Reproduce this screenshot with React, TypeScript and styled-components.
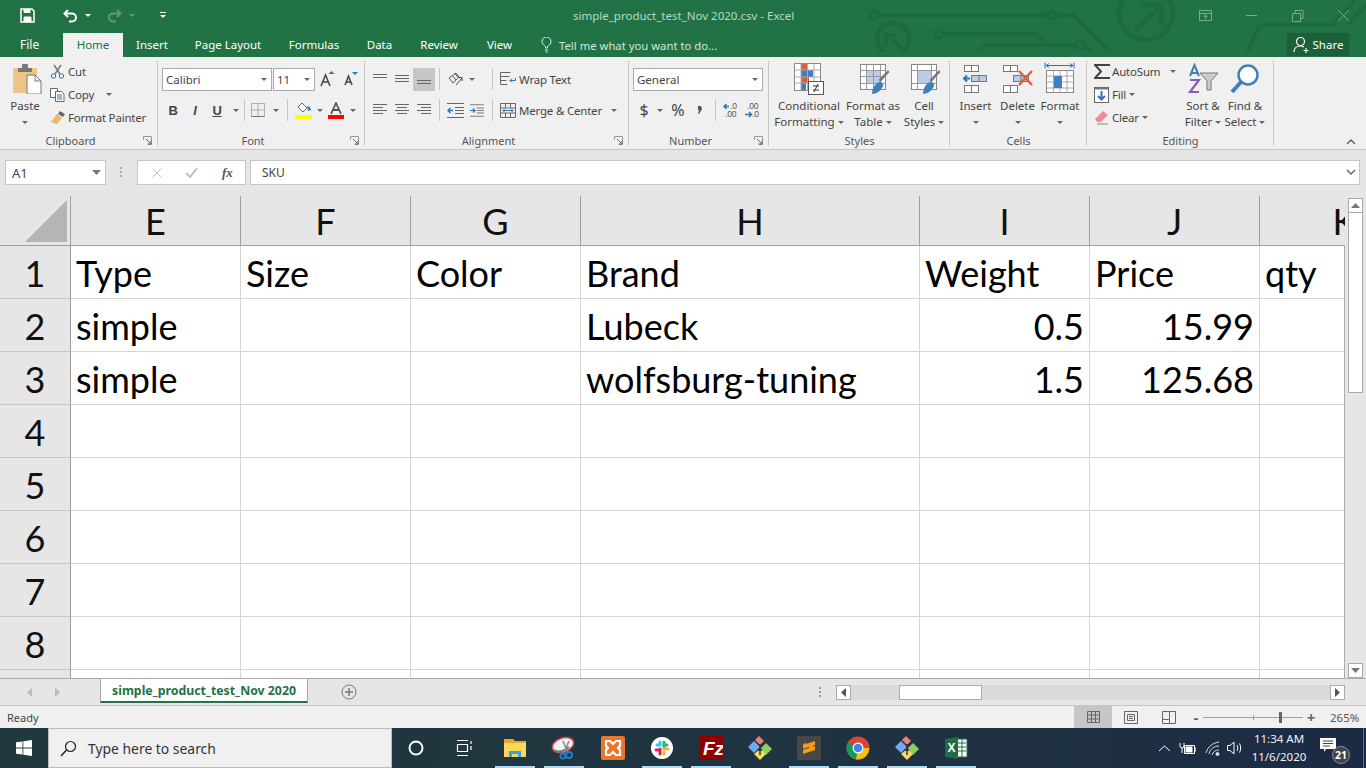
import React from 'react';
import styled, {createGlobalStyle} from 'styled-components';

const UI = '"Noto Sans", "Open Sans", sans-serif';
const SHEET = 'Lato, "Noto Sans", sans-serif';
const GREEN = '#217346';

const Global = createGlobalStyle`
  html, body { margin: 0; padding: 0; height: 100%; overflow: hidden; background: #f0f0f0; }
  * { box-sizing: border-box; }
  #root { width: 1366px; height: 768px; overflow: hidden; }
`;

const Page = styled.div`
  width: 1366px;
  height: 768px;
  display: flex;
  flex-direction: column;
  font-family: ${UI};
  font-size: 11.5px;
  color: #444;
`;

/* ---------- title bar ---------- */
const Header = styled.header`
  position: relative;
  height: 57px;
  flex: none;
  background: ${GREEN};
  color: #fff;
  overflow: hidden;
`;
const Circuit = styled.svg`
  position: absolute;
  left: 860px;
  top: 0;
`;
const TitleRow = styled.div`
  position: relative;
  height: 31px;
  display: flex;
  align-items: center;
`;
const Qat = styled.div`
  width: 573px;
  display: flex;
  align-items: center;
  padding-left: 20px;
`;
const QatSlot = styled.span<{$w: number}>`
  width: ${p => p.$w}px;
  display: flex;
  align-items: center;
`;
const QatCaret = styled.i<{$dim?: boolean}>`
  width: 0;
  height: 0;
  margin-left: 7px;
  border-left: 3px solid transparent;
  border-right: 3px solid transparent;
  border-top: 3px solid ${p => (p.$dim ? '#62977a' : '#fff')};
`;
const Title = styled.div`
  font-size: 11.5px;
  color: #bfd6c9;
  white-space: nowrap;
`;
const WinControls = styled.div`
  margin-left: auto;
  display: flex;
  width: 184px;
`;
const WinBtn = styled.span`
  width: 46px;
  display: flex;
  justify-content: center;
`;
const TabsRow = styled.nav`
  position: relative;
  height: 26px;
  display: flex;
  align-items: flex-end;
`;
const FileTab = styled.div`
  width: 63px;
  height: 24px;
  padding-left: 20px;
  line-height: 24px;
  font-size: 12px;
`;
const Tab = styled.div<{$w: number; $active?: boolean}>`
  width: ${p => p.$w}px;
  height: 24px;
  text-align: center;
  line-height: 23px;
  font-size: 11.5px;
  white-space: nowrap;
  background: ${p => (p.$active ? '#f0f0f0' : 'transparent')};
  color: ${p => (p.$active ? GREEN : '#fff')};
`;
const TellMe = styled.div`
  margin-left: 12px;
  height: 24px;
  display: flex;
  align-items: center;
  gap: 5px;
  font-size: 11.3px;
  color: #d5e5dc;
  white-space: nowrap;
`;
const Share = styled.div`
  margin-left: auto;
  margin-right: 17px;
  width: 62px;
  height: 23px;
  margin-bottom: 1px;
  background: #1c6039;
  display: flex;
  align-items: center;
  justify-content: center;
  gap: 3px;
  font-size: 11.5px;
`;

/* ---------- ribbon ---------- */
const Ribbon = styled.section`
  position: relative;
  height: 93px;
  flex: none;
  background: #f0f0f0;
  border-bottom: 1px solid #c6c6c6;
  display: flex;
  padding-top: 3px;
`;
const Group = styled.div<{$w: number}>`
  position: relative;
  width: ${p => p.$w}px;
  height: 86px;
  flex: none;
  display: flex;
  flex-direction: column;
  &::after {
    content: '';
    position: absolute;
    right: 0;
    top: 1px;
    bottom: 0;
    width: 1px;
    background: #c6c6c6;
  }
`;
const GroupBody = styled.div<{$left?: number}>`
  height: 74px;
  flex: none;
  display: flex;
  padding-left: ${p => p.$left ?? 0}px;
`;
const GroupLabel = styled.div<{$launch?: boolean}>`
  flex: none;
  text-align: center;
  font-size: 11px;
  line-height: 14px;
  color: #555;
  padding-right: ${p => (p.$launch ? 17 : 0)}px;
`;
const Launcher = styled.svg`
  position: absolute;
  right: 6px;
  bottom: 1px;
`;
const BigBtn = styled.div<{$w: number}>`
  width: ${p => p.$w}px;
  flex: none;
  display: flex;
  flex-direction: column;
  align-items: center;
  white-space: nowrap;
`;
const BigIcon = styled.div<{$shift?: number}>`
  height: 38px;
  display: flex;
  align-items: center;
  justify-content: center;
  margin-left: ${p => p.$shift ?? 0}px;
`;
const BigLine = styled.div`
  height: 16px;
  line-height: 16px;
  display: flex;
  align-items: center;
  gap: 3px;
`;
const Caret = styled.i<{$gap?: number}>`
  display: inline-block;
  width: 0;
  height: 0;
  flex: none;
  margin-left: ${p => p.$gap ?? 0}px;
  border-left: 3px solid transparent;
  border-right: 3px solid transparent;
  border-top: 3px solid #666;
`;
const SmallStack = styled.div<{$w?: number}>`
  width: ${p => (p.$w ? `${p.$w}px` : 'auto')};
  flex: none;
  display: flex;
  flex-direction: column;
`;
const SmallRow = styled.div`
  height: 23px;
  display: flex;
  align-items: center;
  white-space: nowrap;
  letter-spacing: -0.2px;
`;
const SmallIconBox = styled.span`
  width: 18px;
  flex: none;
  display: flex;
  justify-content: flex-start;
`;
const Rows = styled.div<{$left: number}>`
  padding: 8px 0 0 ${p => p.$left}px;
  display: flex;
  flex-direction: column;
  gap: 9px;
`;
const Row = styled.div`
  height: 22px;
  display: flex;
  align-items: center;
  white-space: nowrap;
  letter-spacing: -0.2px;
`;
const Slot = styled.span<{$w: number; $on?: boolean; $pad?: number}>`
  width: ${p => p.$w}px;
  height: 23px;
  flex: none;
  padding-left: ${p => p.$pad ?? 0}px;
  display: flex;
  align-items: center;
  justify-content: center;
  background: ${p => (p.$on ? '#c6c6c6' : 'transparent')};
`;
const VSep = styled.span`
  width: 1px;
  height: 22px;
  flex: none;
  background: #c6c6c6;
`;
const Select = styled.div<{$w: number; $gap?: number}>`
  width: ${p => p.$w}px;
  height: 23px;
  flex: none;
  margin-left: ${p => p.$gap ?? 0}px;
  background: #fff;
  border: 1px solid #ababab;
  display: flex;
  align-items: center;
  justify-content: space-between;
  padding: 0 4px 0 3px;
  font-size: 11.5px;
  letter-spacing: 0;
`;
const FontSample = styled.b<{$kind?: string}>`
  font-family: "Liberation Sans", sans-serif;
  font-size: 13px;
  color: #444;
  font-style: ${p => (p.$kind === 'i' ? 'italic' : 'normal')};
  font-weight: 700;
  text-decoration: ${p => (p.$kind === 'u' ? 'underline' : 'none')};
`;
const NumSign = styled.span`
  font-size: 16px;
  color: #444;
  letter-spacing: 0;
`;
const DecText = styled.text`
  font-family: "Liberation Sans", sans-serif;
  font-size: 8.5px;
  fill: #555;
`;
const Collapse = styled.svg`
  position: absolute;
  left: 1346px;
  bottom: 4px;
`;

/* ---------- formula bar ---------- */
const FormulaBar = styled.div`
  height: 40px;
  flex: none;
  background: #e6e6e6;
  display: flex;
  align-items: flex-start;
  padding: 10px 6px 0 5px;
`;
const NameBox = styled.div`
  width: 101px;
  height: 25px;
  background: #fff;
  border: 1px solid #c6c6c6;
  display: flex;
  align-items: center;
  justify-content: space-between;
  padding: 0 4px 0 6px;
  font-size: 13px;
`;
const Grip = styled.div`
  width: 31px;
  height: 25px;
  display: flex;
  align-items: center;
  justify-content: center;
`;
const FxBox = styled.div`
  width: 109px;
  height: 25px;
  background: #fff;
  border: 1px solid #c6c6c6;
  display: flex;
  align-items: center;
  padding-left: 1px;
`;
const FxSlot = styled.span`
  width: 36px;
  display: flex;
  justify-content: center;
  font-family: "Liberation Serif", serif;
  font-style: italic;
  font-weight: 700;
  font-size: 13px;
  color: #555;
`;
const FormulaInput = styled.div`
  margin-left: 4px;
  flex: 1;
  height: 25px;
  background: #fff;
  border: 1px solid #c6c6c6;
  display: flex;
  align-items: center;
  justify-content: space-between;
  padding: 0 3px 0 11px;
  font-size: 12px;
`;

/* ---------- sheet ---------- */
const SheetArea = styled.main`
  height: 488px;
  flex: none;
  background: #e6e6e6;
  display: flex;
  padding-top: 6px;
`;
const Sheet = styled.div`
  position: relative;
  width: 1345px;
  height: 482px;
  flex: none;
  overflow: hidden;
  &::after {
    content: '';
    position: absolute;
    right: 0;
    top: 49px;
    bottom: 0;
    width: 1px;
    background: #ababab;
  }
`;
const SheetRow = styled.div<{$head?: boolean}>`
  display: flex;
  height: ${p => (p.$head ? 50 : 53)}px;
  width: 1600px;
`;
const Corner = styled.div`
  width: 71px;
  flex: none;
  border-right: 1px solid #9f9f9f;
  border-bottom: 1px solid #9f9f9f;
  display: flex;
  align-items: flex-end;
  justify-content: flex-end;
  padding: 0 3px 3px 0;
`;
const RowHead = styled.div`
  width: 71px;
  flex: none;
  background: #e6e6e6;
  border-right: 1px solid #9f9f9f;
  border-bottom: 1px solid #c6c6c6;
  padding-top: 1px;
  display: flex;
  align-items: center;
  justify-content: center;
  font-family: ${SHEET};
  font-size: 36px;
  color: #111;
`;
const ColHead = styled.div<{$w: number}>`
  width: ${p => p.$w}px;
  flex: none;
  border-right: 1px solid #9f9f9f;
  border-bottom: 1px solid #9f9f9f;
  display: flex;
  align-items: center;
  justify-content: center;
  font-family: ${SHEET};
  font-size: 36px;
  color: #111;
`;
const Cell = styled.div<{$w: number; $right?: boolean}>`
  width: ${p => p.$w}px;
  flex: none;
  background: #fff;
  border-right: 1px solid #d4d4d4;
  border-bottom: 1px solid #d4d4d4;
  padding: 1px 5px 0;
  display: flex;
  align-items: center;
  justify-content: ${p => (p.$right ? 'flex-end' : 'flex-start')};
  font-family: ${SHEET};
  font-size: 36px;
  color: #000;
  white-space: nowrap;
`;
const VScroll = styled.div`
  margin: 2px 0 0 3px;
  width: 16px;
  height: 480px;
  display: flex;
  flex-direction: column;
`;
const ScrollBtn = styled.div`
  width: 15px;
  height: 15px;
  flex: none;
  background: #fff;
  border: 1px solid #ababab;
  display: flex;
  align-items: center;
  justify-content: center;
`;
const VThumb = styled.div`
  width: 15px;
  height: 180px;
  flex: none;
  background: #fff;
  border: 1px solid #ababab;
  border-top: none;
`;
const Spacer = styled.div`
  flex: 1;
`;

/* ---------- sheet tabs ---------- */
const TabBar = styled.div`
  height: 28px;
  flex: none;
  background: #e6e6e6;
  border-top: 1px solid #ababab;
  border-bottom: 1px solid #c6c6c6;
  display: flex;
  align-items: flex-start;
`;
const TabNav = styled.div`
  width: 100px;
  height: 26px;
  display: flex;
  align-items: center;
  padding-left: 27px;
  gap: 23px;
`;
const SheetTab = styled.div`
  width: 208px;
  height: 25px;
  margin-top: -1px;
  background: #fff;
  border: 1px solid #ababab;
  border-bottom: 2px solid ${GREEN};
  color: ${GREEN};
  font-weight: 700;
  font-size: 12.3px;
  line-height: 23px;
  text-align: center;
  white-space: nowrap;
`;
const AddSheet = styled.div`
  width: 82px;
  height: 26px;
  display: flex;
  align-items: center;
  justify-content: center;
`;
const HScrollWrap = styled.div`
  margin-left: auto;
  margin-right: 21px;
  margin-top: 6px;
  display: flex;
  align-items: center;
  width: 530px;
`;
const HGrip = styled.div`
  width: 21px;
  display: flex;
  justify-content: flex-start;
  padding-left: 4px;
`;
const HTrack = styled.div`
  flex: 1;
  height: 15px;
  background: #dadada;
  padding-left: 48px;
`;
const HThumb = styled.div`
  width: 83px;
  height: 15px;
  background: #fff;
  border: 1px solid #ababab;
`;

/* ---------- status bar ---------- */
const StatusBar = styled.div`
  height: 22px;
  flex: none;
  background: #f0f0f0;
  display: flex;
  align-items: center;
  padding-left: 7px;
  font-size: 11px;
`;
const StatusRight = styled.div`
  margin-left: auto;
  display: flex;
  align-items: center;
  height: 22px;
`;
const ViewBtn = styled.span<{$on?: boolean}>`
  width: 38px;
  height: 22px;
  display: flex;
  align-items: center;
  justify-content: center;
  background: ${p => (p.$on ? '#c6c6c6' : 'transparent')};
`;
const Zoom = styled.div`
  display: flex;
  align-items: center;
  margin-left: 2px;
`;
const ZoomTrack = styled.div`
  position: relative;
  width: 100px;
  height: 1px;
  margin: 0 2px 0 1px;
  background: #a0a0a0;
`;
const ZoomTick = styled.i<{$pos: number; $big?: boolean}>`
  position: absolute;
  left: ${p => p.$pos}px;
  top: ${p => (p.$big ? -5 : -2)}px;
  width: ${p => (p.$big ? 3 : 1)}px;
  height: ${p => (p.$big ? 11 : 5)}px;
  background: ${p => (p.$big ? '#666' : '#a0a0a0')};
`;
const ZoomSign = styled.span`
  font-size: 15px;
  font-weight: 700;
  width: 12px;
  text-align: center;
  color: #666;
  line-height: 15px;
`;
const ZoomText = styled.span`
  width: 49px;
  padding-left: 13px;
  font-size: 11.5px;
  color: #555;
`;

/* ---------- taskbar ---------- */
const Taskbar = styled.footer`
  height: 40px;
  flex: none;
  background: linear-gradient(90deg, #20393f 0%, #21363f 40%, #1c2b45 100%);
  display: flex;
  align-items: center;
`;
const StartBtn = styled.div`
  width: 48px;
  display: flex;
  justify-content: center;
`;
const SearchBox = styled.div`
  width: 344px;
  height: 40px;
  background: #f0f0f0;
  border: 1px solid #b8bcc0;
  display: flex;
  align-items: center;
  padding-left: 11px;
  gap: 11px;
  font-size: 13.9px;
  color: #333;
`;
const TaskSlot = styled.div`
  width: 48px;
  display: flex;
  justify-content: center;
`;
const TaskGap = styled.div`
  width: 2px;
`;
const AppSlot = styled.div<{$running?: boolean}>`
  position: relative;
  width: 49px;
  height: 40px;
  display: flex;
  align-items: center;
  justify-content: center;
  &::after {
    content: '';
    display: ${p => (p.$running ? 'block' : 'none')};
    position: absolute;
    left: 5px;
    right: 4px;
    bottom: 0;
    height: 2px;
    background: #a9dcfb;
  }
`;
const Tray = styled.div`
  margin-left: auto;
  display: flex;
  align-items: center;
  color: #fff;
  height: 40px;
`;
const TraySlot = styled.div<{$w: number; $pad?: number}>`
  width: ${p => p.$w}px;
  padding-left: ${p => p.$pad ?? 0}px;
  display: flex;
  justify-content: center;
`;
const Clock = styled.div`
  width: 68px;
  text-align: center;
  font-size: 11.5px;
  line-height: 18px;
  color: #f2f2f2;
`;
const Notify = styled.div`
  position: relative;
  width: 36px;
  height: 40px;
  display: flex;
  align-items: center;
  justify-content: center;
`;
const NotifyIcon = styled.svg`
  margin: -6px 0 0 -6px;
`;
const NotifyBadge = styled.span`
  position: absolute;
  left: 19px;
  top: 18px;
  width: 18px;
  height: 18px;
  border-radius: 50%;
  background: #3c434a;
  border: 1px solid #8a8f94;
  color: #fff;
  font-size: 10.5px;
  font-weight: 700;
  line-height: 16px;
  text-align: center;
`;
const DesktopEdge = styled.div`
  width: 15px;
  height: 40px;
  border-right: 1px solid #66727f;
  margin-right: 2px;
`;
const FzLetters = styled.text`
  font-family: "Liberation Sans", sans-serif;
  font-style: italic;
  font-weight: 700;
  font-size: 19px;
  fill: #fff;
`;
const XlLetter = styled.text`
  font-family: "Liberation Sans", sans-serif;
  font-weight: 700;
  font-size: 12px;
  fill: #fff;
`;

/* ---------- drawings ---------- */
const Launch = () => (
  <Launcher width="9" height="9" viewBox="0 0 9 9" fill="none">
    <path d="M.5 4V.5H8.500V8.500H5" stroke="#999" />
    <path d="M3 3l5 5M8 4.500V8H4.500" stroke="#666" />
  </Launcher>
);

const Lines = ({rows, y0 = 0}: {rows: [number, number][]; y0?: number}) => (
  <svg width="16" height="16" viewBox="0 0 16 16" stroke="#666" fill="none">
    {rows.map(([a, b], i) => (
      <path key={i} d={`M${a} ${y0 + i * 3 + 0.5}H${b}`} />
    ))}
  </svg>
);

const FourLines = ({kind}: {kind: 'l' | 'c' | 'r'}) => {
  const rows = [0, 1, 2, 3].map(i => {
    const len = i % 2 ? 10 : 14;
    const x = kind === 'l' ? 1 : kind === 'c' ? 8 - len / 2 : 15 - len;
    return [x, x + len] as [number, number];
  });
  return <Lines rows={rows} y0={2} />;
};

const Paste = () => (
  <svg width="30" height="30" viewBox="0 0 30 30">
    <rect x="1" y="4" width="24" height="25" rx="1" fill="#edc586" />
    <path d="M6 4h4V2a3 3 0 016 0v2h4v4H6z" fill="#777" />
    <path d="M15 11h8l6 6v13H15z" fill="#fff" stroke="#777" />
    <path d="M23 11v6h6" fill="none" stroke="#777" />
  </svg>
);

const StyleGrid = ({big}: {big?: boolean}) => (
  <svg width="30" height="30" viewBox="0 0 30 30" fill="none">
    <rect x=".5" y=".5" width="25" height="25" fill="#fff" stroke="#888" />
    <rect x="6" y={big ? 6 : 7} width={big ? 14 : 15} height={big ? 13 : 12} fill="#b9cee6" />
    {big ? (
      <path d="M.5 6.500h25M.5 19.500h25M6.500.5v25M20.500.5v25" stroke="#999" />
    ) : (
      <path d="M.5 6.500h25M.5 12.500h25M.5 19.500h25M6.500.5v25M13.500.5v25M20.500.5v25" stroke="#999" />
    )}
    <path d="M28 6l1.500 2-9 10-2-2z" fill="#777" />
    <path d="M12 30c0-6 4-12 8-12 3 0 4 3 2 6-2 3-6 6-10 6z" fill="#3f7fbf" />
  </svg>
);

const CondFormat = () => (
  <svg width="30" height="32" viewBox="0 0 30 32" fill="none">
    <rect x=".5" y=".5" width="26" height="27" fill="#fff" stroke="#888" />
    <path d="M7 1h6v6H7zM7 14h8v6H7z" fill="#d9603b" />
    <path d="M7 7h12v7H7zM7 20h5v7H7z" fill="#3f7fbf" />
    <path d="M.5 7h26M.5 14h26M.5 20h26M7 .5v27M13.500.5v27M20 .5v27" stroke="#aaa" />
    <rect x="14.500" y="18.500" width="15" height="13" fill="#fff" stroke="#555" />
    <path d="M19 23h6M19 27h6M24 21l-4 8" stroke="#333" />
  </svg>
);

const CellsIcon = ({kind}: {kind: 'insert' | 'delete'}) => (
  <svg width="32" height="30" viewBox="0 0 32 30" fill="none" stroke="#777">
    <rect x={kind === 'insert' ? 4.5 : 1.5} y="1.500" width="14" height="6" fill="#fff" />
    <path d={kind === 'insert' ? 'M11.500 1.500v6' : 'M8.500 1.500v6'} />
    <rect x="11.500" y="11.500" width="15" height="6" fill="#b9cee6" />
    <path d="M19 11.500v6" />
    <rect x={kind === 'insert' ? 4.5 : 1.5} y="21.500" width="14" height="7" fill="#fff" />
    <path d={kind === 'insert' ? 'M11.500 21.500v7' : 'M8.500 21.500v7'} />
    {kind === 'insert' ? (
      <path d="M10 14.500H4M7 11.500l-3 3 3 3" stroke="#2e75b6" strokeWidth="2" />
    ) : (
      <path d="M17 7l13 14M30 7L17 21" stroke="#d9603b" strokeWidth="2.500" />
    )}
  </svg>
);

const FormatIcon = () => (
  <svg width="32" height="34" viewBox="0 0 32 34" fill="none">
    <path d="M1 .5v6M30 .5v6M2 3.500h27M2 3.500l3-2M2 3.500l3 2M29 3.500l-3-2M29 3.500l-3 2" stroke="#2e75b6" />
    <rect x="2.500" y="8.500" width="27" height="22" fill="#fff" stroke="#888" />
    <path d="M2.500 14h27M2.500 20h27M2.500 26h27M9.500 8.500v22M16 8.500v22M23 8.500v22" stroke="#aaa" />
    <rect x="10" y="14" width="8" height="12" fill="#3f7fbf" />
  </svg>
);

const Tb = ({d, w = 16, h = 16, c = '#666', f = 'none'}: {d: string; w?: number; h?: number; c?: string; f?: string}) => (
  <svg width={w} height={h} viewBox={`0 0 ${w} ${h}`} fill={f} stroke={c}>
    <path d={d} />
  </svg>
);

const Diamond = () => (
  <svg width="26" height="26" viewBox="0 0 26 26">
    <path d="M13 14l6-6 6 6-6 6z" fill="#8ed05c" />
    <path d="M1 12l6-6 6 6-6 6z" fill="#74a9f5" />
    <path d="M7 19l6-5 6 5-6 6z" fill="#f8d968" />
    <path d="M8 5l4-4 5 5-4 4z" fill="#ef7f7f" />
    <path d="M13 9v11M11 14l2 2 2-2" stroke="#333" strokeWidth="1.500" fill="none" />
  </svg>
);

const Apps = [
  {
    on: true,
    node: (
      <svg width="24" height="20" viewBox="0 0 24 20">
        <path d="M1 1h9l2 2h11v16H1z" fill="#e8a72b" />
        <path d="M1 5h22v14H1z" fill="#fbd85a" />
        <path d="M6 19v-6h12v6h-3v-3H9v3z" fill="#3aa0e0" />
      </svg>
    ),
  },
  {
    on: true,
    node: (
      <svg width="26" height="24" viewBox="0 0 26 24" fill="none">
        <ellipse cx="12" cy="9" rx="11" ry="7" transform="rotate(-20 12 9)" fill="#f2f2f2" stroke="#d44" strokeWidth="1.500" />
        <path d="M3 14c4 3 10 1 15-3" stroke="#777" strokeWidth="2" />
        <path d="M12 5l5 12M18 5l-5 12" stroke="#888" strokeWidth="1.500" />
        <circle cx="18" cy="19" r="3" stroke="#1a80c8" strokeWidth="2" />
        <circle cx="12" cy="20" r="2.500" stroke="#1a80c8" strokeWidth="2" />
      </svg>
    ),
  },
  {
    on: false,
    node: (
      <svg width="24" height="24" viewBox="0 0 24 24" fill="none">
        <rect width="24" height="24" rx="2" fill="#e8762c" />
        <path d="M5 5h4l3 3 3-3h4v5l-2 2 2 2v5h-4l-3-3-3 3H5v-5l2-2-2-2z" stroke="#fff" strokeWidth="2.200" />
      </svg>
    ),
  },
  {
    on: true,
    node: (
      <svg width="22" height="22" viewBox="0 0 22 22" fill="none" strokeWidth="3" strokeLinecap="round">
        <circle cx="11" cy="11" r="11" fill="#fff" />
        <path d="M9 5v3H6" stroke="#36c5f0" />
        <path d="M13 5v5" stroke="#2eb67d" />
        <path d="M13 8h3" stroke="#2eb67d" />
        <path d="M17 12h-4" stroke="#ecb22e" />
        <path d="M13 17v-2" stroke="#ecb22e" />
        <path d="M9 12v5" stroke="#e01e5a" />
        <path d="M5 13h4" stroke="#e01e5a" />
      </svg>
    ),
  },
  {
    on: true,
    node: (
      <svg width="24" height="24" viewBox="0 0 24 24">
        <rect width="24" height="24" fill="#8f0000" />
        <FzLetters x="4" y="19">Fz</FzLetters>
      </svg>
    ),
  },
  {on: false, node: <Diamond />},
  {
    on: true,
    node: (
      <svg width="24" height="24" viewBox="0 0 24 24">
        <rect width="24" height="24" rx="2" fill="#474747" />
        <path d="M18 5L6 9v4l12 -4zM18 10L6 14v4l12-4zM6 9l12 5v-3L8 7z" fill="#f89a1c" />
      </svg>
    ),
  },
  {
    on: true,
    node: (
      <svg width="24" height="24" viewBox="0 0 24 24">
        <circle cx="12" cy="12" r="11.500" fill="#db4437" />
        <path d="M12 12L2 6.500A11.500 11.500 0 002 17.500 11.500 11.500 0 0010 23.400z" fill="#0f9d58" />
        <path d="M12 12h11.300A11.500 11.500 0 0110 23.400z" fill="#f4c20d" />
        <circle cx="12" cy="12" r="5.500" fill="#fff" />
        <circle cx="12" cy="12" r="4.300" fill="#4285f4" />
      </svg>
    ),
  },
  {on: true, node: <Diamond />},
  {
    on: true,
    node: (
      <svg width="24" height="24" viewBox="0 0 24 24">
        <path d="M12 3h11v18H12z" fill="#fff" stroke="#217346" />
        <path d="M14 7h8M14 11h8M14 15h8M18 3v18" stroke="#217346" />
        <path d="M1 3l13-2v22L1 21z" fill="#1d6f42" />
        <XlLetter x="3.500" y="16">X</XlLetter>
      </svg>
    ),
  },
];

const columns = [
  {label: 'E', w: 170},
  {label: 'F', w: 170},
  {label: 'G', w: 170},
  {label: 'H', w: 339},
  {label: 'I', w: 170},
  {label: 'J', w: 170},
  {label: 'K', w: 170},
];

const rows: Array<Array<string>> = [
  ['Type', 'Size', 'Color', 'Brand', 'Weight', 'Price', 'qty'],
  ['simple', '', '', 'Lubeck', '0.5', '15.99', ''],
  ['simple', '', '', 'wolfsburg-tuning', '1.5', '125.68', ''],
  ['', '', '', '', '', '', ''],
  ['', '', '', '', '', '', ''],
  ['', '', '', '', '', '', ''],
  ['', '', '', '', '', '', ''],
  ['', '', '', '', '', '', ''],
  ['', '', '', '', '', '', ''],
];

const App: React.FC = () => {
  return (
    <Page>
      <Global />
      <Header>
        <Circuit width="506" height="52" viewBox="860 0 506 52" fill="none" stroke="#1e6a3f" strokeWidth="4">
          <circle cx="874" cy="15" r="4" strokeWidth="3" />
          <path d="M878 15H1047M1055 15h19l37 37" />
          <circle cx="1051" cy="15" r="4" strokeWidth="3" />
          <circle cx="939" cy="34" r="4" strokeWidth="3" />
          <path d="M943 34h93l12 11h28M1084 45l8 7" />
          <circle cx="1080" cy="45" r="4" strokeWidth="3" />
          <path d="M977 52l10-7h89" />
          <circle cx="1146" cy="13" r="27" strokeWidth="5" />
          <path d="M1135 31l26-26M1141 5h20v20" strokeWidth="5" />
          <circle cx="893" cy="39" r="16" strokeWidth="5" />
          <path d="M901 47l-15-12M886 46V35h11" strokeWidth="4" />
          <path d="M1247 52l13-27h73l22-25M1347 25l19-20" />
        </Circuit>
        <TitleRow>
          <Qat>
            <QatSlot $w={43}>
              <svg width="15" height="15" viewBox="0 0 15 15" fill="none" stroke="#fff">
                <path d="M1 1h11l2 2v11H1z" strokeWidth="1.500" />
                <path d="M4 1.500h6v3H4zM4 14V9h7v5" fill="#fff" />
              </svg>
            </QatSlot>
            <QatSlot $w={44}>
              <svg width="15" height="14" viewBox="0 0 15 14" fill="none" stroke="#fff" strokeWidth="2">
                <path d="M5 1L1.500 4.500 5 8M2 4.500h7a4 4 0 010 8H6" />
              </svg>
              <QatCaret />
            </QatSlot>
            <QatSlot $w={53}>
              <svg width="15" height="14" viewBox="0 0 15 14" fill="none" stroke="#62977a" strokeWidth="2">
                <path d="M10 1l3.500 3.500L10 8M13 4.500H6a4 4 0 000 8h3" />
              </svg>
              <QatCaret $dim />
            </QatSlot>
            <svg width="7" height="7" viewBox="0 0 7 7" fill="#fff">
              <rect width="6" height="1" />
              <path d="M0 3h6L3 6z" />
            </svg>
          </Qat>
          <Title>simple_product_test_Nov 2020.csv - Excel</Title>
          <WinControls>
            <WinBtn>
              <Tb d="M1.500 2.500h12v10h-12zM1.500 5.500h12M7.500 11V7M5.500 9l2-2 2 2" w={15} h={15} c="#7fa98f" />
            </WinBtn>
            <WinBtn>
              <Tb d="M2 7.500h11" w={15} h={15} c="#7fa98f" />
            </WinBtn>
            <WinBtn>
              <Tb d="M2.500 5.500h8v8h-8zM5 5V2.500h8v8h-2" w={15} h={15} c="#7fa98f" />
            </WinBtn>
            <WinBtn>
              <Tb d="M2 2l11 11M13 2L2 13" w={15} h={15} c="#7fa98f" />
            </WinBtn>
          </WinControls>
        </TitleRow>
        <TabsRow>
          <FileTab>File</FileTab>
          <Tab $w={60} $active>Home</Tab>
          <Tab $w={58}>Insert</Tab>
          <Tab $w={94}>Page Layout</Tab>
          <Tab $w={78}>Formulas</Tab>
          <Tab $w={53}>Data</Tab>
          <Tab $w={66}>Review</Tab>
          <Tab $w={55}>View</Tab>
          <TellMe>
            <Tb d="M6.500 11v-1.500C5 8 3 7 3 4.500a4.500 4.500 0 019 0c0 2.500-2 3.500-3.500 5V11zM6 13h3M6.500 15h2" w={15} h={16} c="#e8f0ec" />
            Tell me what you want to do...
          </TellMe>
          <Share>
            <svg width="17" height="18" viewBox="0 0 17 18" fill="none" stroke="#fff" strokeWidth="1.200">
              <circle cx="7.500" cy="5.500" r="4" />
              <path d="M1 16c0-4 3-6 6.500-6 1.500 0 2.500.4 3.500 1M13 12v5M10.500 14.500h5" />
            </svg>
            Share
          </Share>
        </TabsRow>
      </Header>

      <Ribbon>
        <Group $w={158}>
          <GroupBody>
            <BigBtn $w={50}>
              <BigIcon $shift={3}><Paste /></BigIcon>
              <BigLine>Paste</BigLine>
              <BigLine><Caret /></BigLine>
            </BigBtn>
            <SmallStack>
              <SmallRow>
                <SmallIconBox>
                  <svg width="15" height="15" viewBox="0 0 15 15" fill="none">
                    <path d="M4 1l6 9M11 1L5 10" stroke="#777" strokeWidth="1.500" />
                    <circle cx="3.500" cy="12" r="2.200" stroke="#2e75b6" />
                    <circle cx="11.500" cy="12" r="2.200" stroke="#2e75b6" />
                  </svg>
                </SmallIconBox>
                Cut
              </SmallRow>
              <SmallRow>
                <SmallIconBox>
                  <svg width="15" height="15" viewBox="0 0 15 15" fill="#fff" stroke="#666">
                    <path d="M.5 1.500h7v9h-7z" />
                    <path d="M5.500 4.500h6l2.500 2.500v7.500H5.500z" />
                    <path d="M7 8h5M7 10h5M7 12h5" stroke="#2e75b6" />
                  </svg>
                </SmallIconBox>
                Copy
                <Caret $gap={12} />
              </SmallRow>
              <SmallRow>
                <SmallIconBox>
                  <svg width="16" height="15" viewBox="0 0 16 15">
                    <path d="M10 1l5 3-2 3-5-3z" fill="#666" />
                    <path d="M7 4l5 4-5 6c-2 0-5-2-7-3 2 0 3-1 3-2z" fill="#edb868" />
                  </svg>
                </SmallIconBox>
                Format Painter
              </SmallRow>
            </SmallStack>
          </GroupBody>
          <GroupLabel $launch>Clipboard</GroupLabel>
          <Launch />
        </Group>

        <Group $w={207}>
          <GroupBody>
            <Rows $left={4}>
              <Row>
                <Select $w={110}>Calibri<Caret /></Select>
                <Select $w={42} $gap={1}>11<Caret /></Select>
                <Slot $w={26}>
                  <svg width="16" height="16" viewBox="0 0 16 16" fill="none">
                    <path d="M1 15L5.500 4 10 15M3 11h5" stroke="#444" strokeWidth="1.500" />
                    <path d="M8.500 3l3-3 3 3z" fill="#2e75b6" />
                  </svg>
                </Slot>
                <Slot $w={20}>
                  <svg width="14" height="14" viewBox="0 0 14 14" fill="none">
                    <path d="M1 13L4.500 4 8 13M2.500 10h4" stroke="#444" strokeWidth="1.500" />
                    <path d="M8 0h6l-3 3z" fill="#2e75b6" />
                  </svg>
                </Slot>
              </Row>
              <Row>
                <Slot $w={22}><FontSample>B</FontSample></Slot>
                <Slot $w={22}><FontSample $kind="i">I</FontSample></Slot>
                <Slot $w={22}><FontSample $kind="u">U</FontSample></Slot>
                <Slot $w={16}><Caret /></Slot>
                <VSep />
                <Slot $w={26}>
                  <svg width="14" height="14" viewBox="0 0 14 14" fill="none" stroke="#777" strokeDasharray="1 1">
                    <path d="M.5.500h13v13H.5zM7 .5v13M.5 7h13" />
                    <path d="M.5 13.500h13" strokeDasharray="none" />
                  </svg>
                </Slot>
                <Slot $w={10}><Caret /></Slot>
                <Slot $w={6} />
                <VSep />
                <Slot $w={30}>
                  <svg width="17" height="17" viewBox="0 0 17 17" fill="none">
                    <path d="M7 1l5 5-4 4-5-5z" fill="#fff" stroke="#666" />
                    <path d="M12 4l3 1 1 3-3 1z" fill="#3f7fbf" />
                    <rect y="13" width="17" height="4" fill="#ffff00" />
                  </svg>
                </Slot>
                <Slot $w={3}><Caret /></Slot>
                <Slot $w={30}>
                  <svg width="16" height="17" viewBox="0 0 16 17">
                    <path d="M3 12L8 1l5 11M5 8h6" fill="none" stroke="#555" strokeWidth="1.800" />
                    <rect y="13" width="16" height="4" fill="#ff0000" />
                  </svg>
                </Slot>
                <Slot $w={4}><Caret /></Slot>
              </Row>
            </Rows>
          </GroupBody>
          <GroupLabel $launch>Font</GroupLabel>
          <Launch />
        </Group>

        <Group $w={264}>
          <GroupBody>
            <Rows $left={4}>
              <Row>
                <Slot $w={22}><Lines rows={[[1, 15], [1, 15]]} y0={3} /></Slot>
                <Slot $w={22}><Lines rows={[[1, 15], [1, 15], [1, 15]]} y0={4} /></Slot>
                <Slot $w={22} $on><Lines rows={[[1, 15], [1, 15]]} y0={9} /></Slot>
                <Slot $w={4} />
                <VSep />
                <Slot $w={36} $pad={6}>
                  <svg width="16" height="16" viewBox="0 0 16 16" fill="none" stroke="#555">
                    <path d="M1 7l7-5 3 4-6 6zM4 4l4 5M7 2.500l3 4" />
                    <path d="M8 14l6-7M11 6.500h3V10" stroke="#444" />
                  </svg>
                  <Caret $gap={5} />
                </Slot>
                <Slot $w={16} />
                <VSep />
                <Slot $w={26} $pad={3}>
                  <svg width="16" height="16" viewBox="0 0 16 16" fill="none" stroke="#666">
                    <path d="M.5 1.500h10M.5 5.500h9M.5 9.500h6M.5 13.500h7M.5 1.500v12" />
                    <path d="M15.500 7v2.500H10M12 7.500l-2 2 2 2" stroke="#2e75b6" />
                  </svg>
                </Slot>
                Wrap Text
              </Row>
              <Row>
                <Slot $w={22}><FourLines kind="l" /></Slot>
                <Slot $w={22}><FourLines kind="c" /></Slot>
                <Slot $w={22}><FourLines kind="r" /></Slot>
                <Slot $w={4} />
                <VSep />
                <Slot $w={30}>
                  <svg width="17" height="15" viewBox="0 0 17 15" fill="none" stroke="#666">
                    <path d="M0 .5h17M8 4.500h9M8 7.500h9M8 10.500h9M0 14.500h17" />
                    <path d="M6 7.500H1M3.500 5L1 7.500 3.500 10" stroke="#2e75b6" strokeWidth="1.500" />
                  </svg>
                </Slot>
                <Slot $w={14}>
                  <svg width="17" height="15" viewBox="0 0 17 15" fill="none" stroke="#666">
                    <path d="M0 .5h17M8 4.500h9M8 7.500h9M8 10.500h9M0 14.500h17" />
                    <path d="M0 7.500h6M3.500 5L6 7.500 3.500 10" stroke="#2e75b6" strokeWidth="1.500" />
                  </svg>
                </Slot>
                <Slot $w={8} />
                <VSep />
                <Slot $w={26} $pad={3}>
                  <svg width="16" height="15" viewBox="0 0 16 15" fill="none" stroke="#666">
                    <path d="M.5.5h15v14H.5zM.5 5h15M.5 10h15M5.500.5V5M10.500.5V5M5.500 10v4.500M10.500 10v4.500" />
                    <path d="M3 7.500h10M4.500 6L3 7.500 4.500 9M11.500 6L13 7.500 11.500 9" stroke="#2e75b6" />
                  </svg>
                </Slot>
                Merge &amp; Center
                <Caret $gap={9} />
              </Row>
            </Rows>
          </GroupBody>
          <GroupLabel $launch>Alignment</GroupLabel>
          <Launch />
        </Group>

        <Group $w={140}>
          <GroupBody>
            <Rows $left={4}>
              <Row>
                <Select $w={130}>General<Caret /></Select>
              </Row>
              <Row>
                <Slot $w={22}><NumSign>$</NumSign></Slot>
                <Slot $w={10}><Caret /></Slot>
                <Slot $w={26}><NumSign>%</NumSign></Slot>
                <Slot $w={16}>
                  <svg width="5" height="8" viewBox="0 0 5 8" fill="#555"><path d="M1 0h3l1 3-3 5H1l1-4H1z" /></svg>
                </Slot>
                <Slot $w={8} />
                <VSep />
                <Slot $w={28}>
                  <svg width="15" height="16" viewBox="0 0 15 16" fill="none">
                    <path d="M6 4.500H1M3.500 2L1 4.500 3.500 7" stroke="#2e75b6" strokeWidth="1.500" />
                    <DecText x="7" y="7">.0</DecText>
                    <DecText x="2" y="15">.00</DecText>
                  </svg>
                </Slot>
                <Slot $w={16}>
                  <svg width="15" height="16" viewBox="0 0 15 16" fill="none">
                    <DecText x="2" y="7">.00</DecText>
                    <path d="M0 12.500h6M4 10l2.500 2.500L4 15" stroke="#2e75b6" strokeWidth="1.500" />
                    <DecText x="7" y="15">.0</DecText>
                  </svg>
                </Slot>
              </Row>
            </Rows>
          </GroupBody>
          <GroupLabel $launch>Number</GroupLabel>
          <Launch />
        </Group>

        <Group $w={181}>
          <GroupBody $left={5}>
            <BigBtn $w={70}>
              <BigIcon><CondFormat /></BigIcon>
              <BigLine>Conditional</BigLine>
              <BigLine>Formatting <Caret /></BigLine>
            </BigBtn>
            <BigBtn $w={58}>
              <BigIcon $shift={3}><StyleGrid /></BigIcon>
              <BigLine>Format as</BigLine>
              <BigLine>Table <Caret /></BigLine>
            </BigBtn>
            <BigBtn $w={44}>
              <BigIcon $shift={3}><StyleGrid big /></BigIcon>
              <BigLine>Cell</BigLine>
              <BigLine>Styles <Caret /></BigLine>
            </BigBtn>
          </GroupBody>
          <GroupLabel>Styles</GroupLabel>
        </Group>

        <Group $w={137}>
          <GroupBody $left={5}>
            <BigBtn $w={41}>
              <BigIcon><CellsIcon kind="insert" /></BigIcon>
              <BigLine>Insert</BigLine>
              <BigLine><Caret /></BigLine>
            </BigBtn>
            <BigBtn $w={43}>
              <BigIcon><CellsIcon kind="delete" /></BigIcon>
              <BigLine>Delete</BigLine>
              <BigLine><Caret /></BigLine>
            </BigBtn>
            <BigBtn $w={42}>
              <BigIcon><FormatIcon /></BigIcon>
              <BigLine>Format</BigLine>
              <BigLine><Caret /></BigLine>
            </BigBtn>
          </GroupBody>
          <GroupLabel>Cells</GroupLabel>
        </Group>

        <Group $w={187}>
          <GroupBody $left={7}>
            <SmallStack $w={88}>
              <SmallRow>
                <SmallIconBox>
                  <svg width="16" height="15" viewBox="0 0 16 15" fill="none" stroke="#444" strokeWidth="2">
                    <path d="M15 2V1H1l6 6.500L1 14h14v-1" />
                  </svg>
                </SmallIconBox>
                AutoSum
                <Caret $gap={10} />
              </SmallRow>
              <SmallRow>
                <SmallIconBox>
                  <svg width="15" height="16" viewBox="0 0 15 16" fill="none">
                    <rect x=".5" y=".5" width="14" height="15" fill="#fff" stroke="#666" />
                    <path d="M.5.500h14v2H.5z" fill="#777" />
                    <path d="M7.500 4v8M4 9l3.500 3.500L11 9" stroke="#2e75b6" strokeWidth="2" />
                  </svg>
                </SmallIconBox>
                Fill
                <Caret $gap={3} />
              </SmallRow>
              <SmallRow>
                <SmallIconBox>
                  <svg width="15" height="15" viewBox="0 0 15 15">
                    <path d="M9 1l5 4-7 7H3L1 9z" fill="#ec8c9c" />
                    <path d="M3 14h11" stroke="#888" />
                  </svg>
                </SmallIconBox>
                Clear
                <Caret $gap={3} />
              </SmallRow>
            </SmallStack>
            <BigBtn $w={42}>
              <BigIcon>
                <svg width="32" height="32" viewBox="0 0 32 32" fill="none">
                  <path d="M3 13L7.500 2 12 13M4.500 10h6" stroke="#3f7fbf" strokeWidth="2" />
                  <path d="M3 17h9L3 29h9" stroke="#8e5bb8" strokeWidth="2.200" />
                  <path d="M13 10h18l-7 8v9h-4v-9z" fill="#ccc" stroke="#777" />
                </svg>
              </BigIcon>
              <BigLine>Sort &amp;</BigLine>
              <BigLine>Filter <Caret /></BigLine>
            </BigBtn>
            <BigBtn $w={42}>
              <BigIcon>
                <svg width="30" height="32" viewBox="0 0 30 32" fill="none">
                  <circle cx="18" cy="12" r="9.500" stroke="#3f7fbf" strokeWidth="2.500" fill="#fff" />
                  <path d="M11 19L2 29" stroke="#3f7fbf" strokeWidth="4" />
                </svg>
              </BigIcon>
              <BigLine>Find &amp;</BigLine>
              <BigLine>Select <Caret /></BigLine>
            </BigBtn>
          </GroupBody>
          <GroupLabel>Editing</GroupLabel>
        </Group>

        <Collapse width="10" height="7" viewBox="0 0 10 7" fill="none" stroke="#666" strokeWidth="1.500">
          <path d="M1 6l4-4 4 4" />
        </Collapse>
      </Ribbon>

      <FormulaBar>
        <NameBox>
          A1
          <svg width="9" height="5" viewBox="0 0 9 5" fill="#777"><path d="M0 0h9L4.500 5z" /></svg>
        </NameBox>
        <Grip>
          <svg width="3" height="11" viewBox="0 0 3 11" fill="#aaa">
            <rect y="0" width="2" height="2" />
            <rect y="4" width="2" height="2" />
            <rect y="8" width="2" height="2" />
          </svg>
        </Grip>
        <FxBox>
          <FxSlot>
            <Tb d="M1.500 1.500l9 9M10.500 1.500l-9 9" w={12} h={12} c="#c0c0c0" />
          </FxSlot>
          <FxSlot>
            <svg width="13" height="12" viewBox="0 0 13 12" fill="none" stroke="#c0c0c0" strokeWidth="2">
              <path d="M1 6l4 4 7-9" />
            </svg>
          </FxSlot>
          <FxSlot>fx</FxSlot>
        </FxBox>
        <FormulaInput>
          SKU
          <svg width="10" height="7" viewBox="0 0 10 7" fill="none" stroke="#666" strokeWidth="1.500">
            <path d="M1 1l4 4 4-4" />
          </svg>
        </FormulaInput>
      </FormulaBar>

      <SheetArea>
        <Sheet>
          <SheetRow $head>
            <Corner>
              <svg width="42" height="42" viewBox="0 0 42 42" fill="#b5b5b5"><path d="M42 0v42H0z" /></svg>
            </Corner>
            {columns.map(c => (
              <ColHead key={c.label} $w={c.w}>{c.label}</ColHead>
            ))}
          </SheetRow>
          {rows.map((cells, i) => (
            <SheetRow key={i}>
              {/* row 9 only shows its top few pixels, its number stays below the fold */}
              <RowHead>{i < 8 ? i + 1 : ''}</RowHead>
              {cells.map((v, j) => (
                <Cell key={j} $w={columns[j].w} $right={/^[\d.]+$/.test(v)}>{v}</Cell>
              ))}
            </SheetRow>
          ))}
        </Sheet>
        <VScroll>
          <ScrollBtn>
            <svg width="9" height="5" viewBox="0 0 9 5" fill="#777"><path d="M0 5h9L4.500 0z" /></svg>
          </ScrollBtn>
          <VThumb />
          <Spacer />
          <ScrollBtn>
            <svg width="9" height="5" viewBox="0 0 9 5" fill="#777"><path d="M0 0h9L4.500 5z" /></svg>
          </ScrollBtn>
        </VScroll>
      </SheetArea>

      <TabBar>
        <TabNav>
          <svg width="5" height="9" viewBox="0 0 5 9" fill="#bbb"><path d="M5 0v9L0 4.500z" /></svg>
          <svg width="5" height="9" viewBox="0 0 5 9" fill="#bbb"><path d="M0 0v9l5-4.500z" /></svg>
        </TabNav>
        <SheetTab>simple_product_test_Nov 2020</SheetTab>
        <AddSheet>
          <svg width="16" height="16" viewBox="0 0 16 16" fill="none" stroke="#777">
            <circle cx="8" cy="8" r="7" />
            <path d="M8 4v8M4 8h8" strokeWidth="1.500" />
          </svg>
        </AddSheet>
        <HScrollWrap>
          <HGrip>
            <svg width="3" height="11" viewBox="0 0 3 11" fill="#999">
              <rect y="0" width="2" height="2" />
              <rect y="4" width="2" height="2" />
              <rect y="8" width="2" height="2" />
            </svg>
          </HGrip>
          <ScrollBtn>
            <svg width="5" height="9" viewBox="0 0 5 9" fill="#555"><path d="M5 0v9L0 4.500z" /></svg>
          </ScrollBtn>
          <HTrack><HThumb /></HTrack>
          <ScrollBtn>
            <svg width="5" height="9" viewBox="0 0 5 9" fill="#555"><path d="M0 0v9l5-4.500z" /></svg>
          </ScrollBtn>
        </HScrollWrap>
      </TabBar>

      <StatusBar>
        Ready
        <StatusRight>
          <ViewBtn $on>
            <Tb d="M.5.500h12v11H.5zM4.500.5v11M8.500.5v11M.5 4h12M.5 8h12" w={13} h={12} c="#666" />
          </ViewBtn>
          <ViewBtn>
            <Tb d="M.5.500h13v12H.5zM3.500 3.500h7v6h-7zM5 5.500h4M5 7.500h4" w={14} h={13} c="#666" />
          </ViewBtn>
          <ViewBtn>
            <Tb d="M.5.500h13v12H.5zM.5 8.500h7v-8M7.500 8.500v4" w={14} h={13} c="#666" />
          </ViewBtn>
          <Zoom>
            <ZoomSign>-</ZoomSign>
            <ZoomTrack>
              <ZoomTick $pos={50} />
              <ZoomTick $pos={76} $big />
            </ZoomTrack>
            <ZoomSign>+</ZoomSign>
          </Zoom>
          <ZoomText>265%</ZoomText>
        </StatusRight>
      </StatusBar>

      <Taskbar>
        <StartBtn>
          <svg width="16" height="16" viewBox="0 0 16 16" fill="#fff">
            <path d="M0 2.300l6.500-.9v6.200H0zM7.300 1.300L16 0v7.600H7.300zM0 8.400h6.500v6.200L0 13.700zM7.300 8.400H16V16l-8.700-1.300z" />
          </svg>
        </StartBtn>
        <SearchBox>
          <svg width="17" height="17" viewBox="0 0 17 17" fill="none" stroke="#222" strokeWidth="1.200">
            <circle cx="10.500" cy="6.500" r="5" />
            <path d="M6.500 10L1 16" strokeWidth="1.500" />
          </svg>
          Type here to search
        </SearchBox>
        <TaskSlot>
          <svg width="16" height="16" viewBox="0 0 16 16" fill="none" stroke="#fff" strokeWidth="2">
            <circle cx="8" cy="8" r="6.500" />
          </svg>
        </TaskSlot>
        <TaskSlot>
          <svg width="17" height="16" viewBox="0 0 17 16" fill="none" stroke="#fff" strokeWidth="1.200">
            <path d="M1 .5h11M1 15.500h11M1.500 4.500h10v7h-10zM15 1v3M15 6v4" />
          </svg>
        </TaskSlot>
        <TaskGap />
        {Apps.map((a, i) => (
          <AppSlot key={i} $running={a.on}>{a.node}</AppSlot>
        ))}
        <Tray>
          <TraySlot $w={24} $pad={3}>
            <Tb d="M1 7l5.500-5L12 7" w={13} h={9} c="#fff" />
          </TraySlot>
          <TraySlot $w={24}>
            <svg width="17" height="13" viewBox="0 0 17 13" fill="none" stroke="#fff">
              <path d="M5.500 3.500h10v8h-10zM15.500 6h1.500v3h-1.500" />
              <path d="M1 1v3a2 2 0 004 0V1M3 6v5" />
              <rect x="7" y="5" width="6" height="5" fill="#fff" />
            </svg>
          </TraySlot>
          <TraySlot $w={26}>
            <svg width="15" height="15" viewBox="0 0 15 15" fill="none" stroke="#fff" opacity=".85">
              <path d="M1 12C3 5 8 2 14 1M4 13c1-5 5-8 10-8M7 14c1-3 3-5 7-5" />
              <circle cx="12.500" cy="13" r="1.500" fill="#fff" />
            </svg>
          </TraySlot>
          <TraySlot $w={20}>
            <svg width="16" height="14" viewBox="0 0 16 14" fill="none" stroke="#fff">
              <path d="M.5 4.500h2.500L7 1v12L3 9.500H.5zM10 4c1 1 1 5 0 6M12.500 2.500c1.500 2 1.500 7 0 9" />
            </svg>
          </TraySlot>
          <Clock>
            11:34 AM
            <br />
            11/6/2020
          </Clock>
          <Notify>
            <NotifyIcon width="16" height="14" viewBox="0 0 16 14" fill="#fff">
              <path d="M0 0h16v11H6l-2 3v-3H0z" />
              <path d="M3 3h10M3 5.500h10M3 8h7" stroke="#444" />
            </NotifyIcon>
            <NotifyBadge>21</NotifyBadge>
          </Notify>
          <DesktopEdge />
        </Tray>
      </Taskbar>
    </Page>
  );
};

export default App;
